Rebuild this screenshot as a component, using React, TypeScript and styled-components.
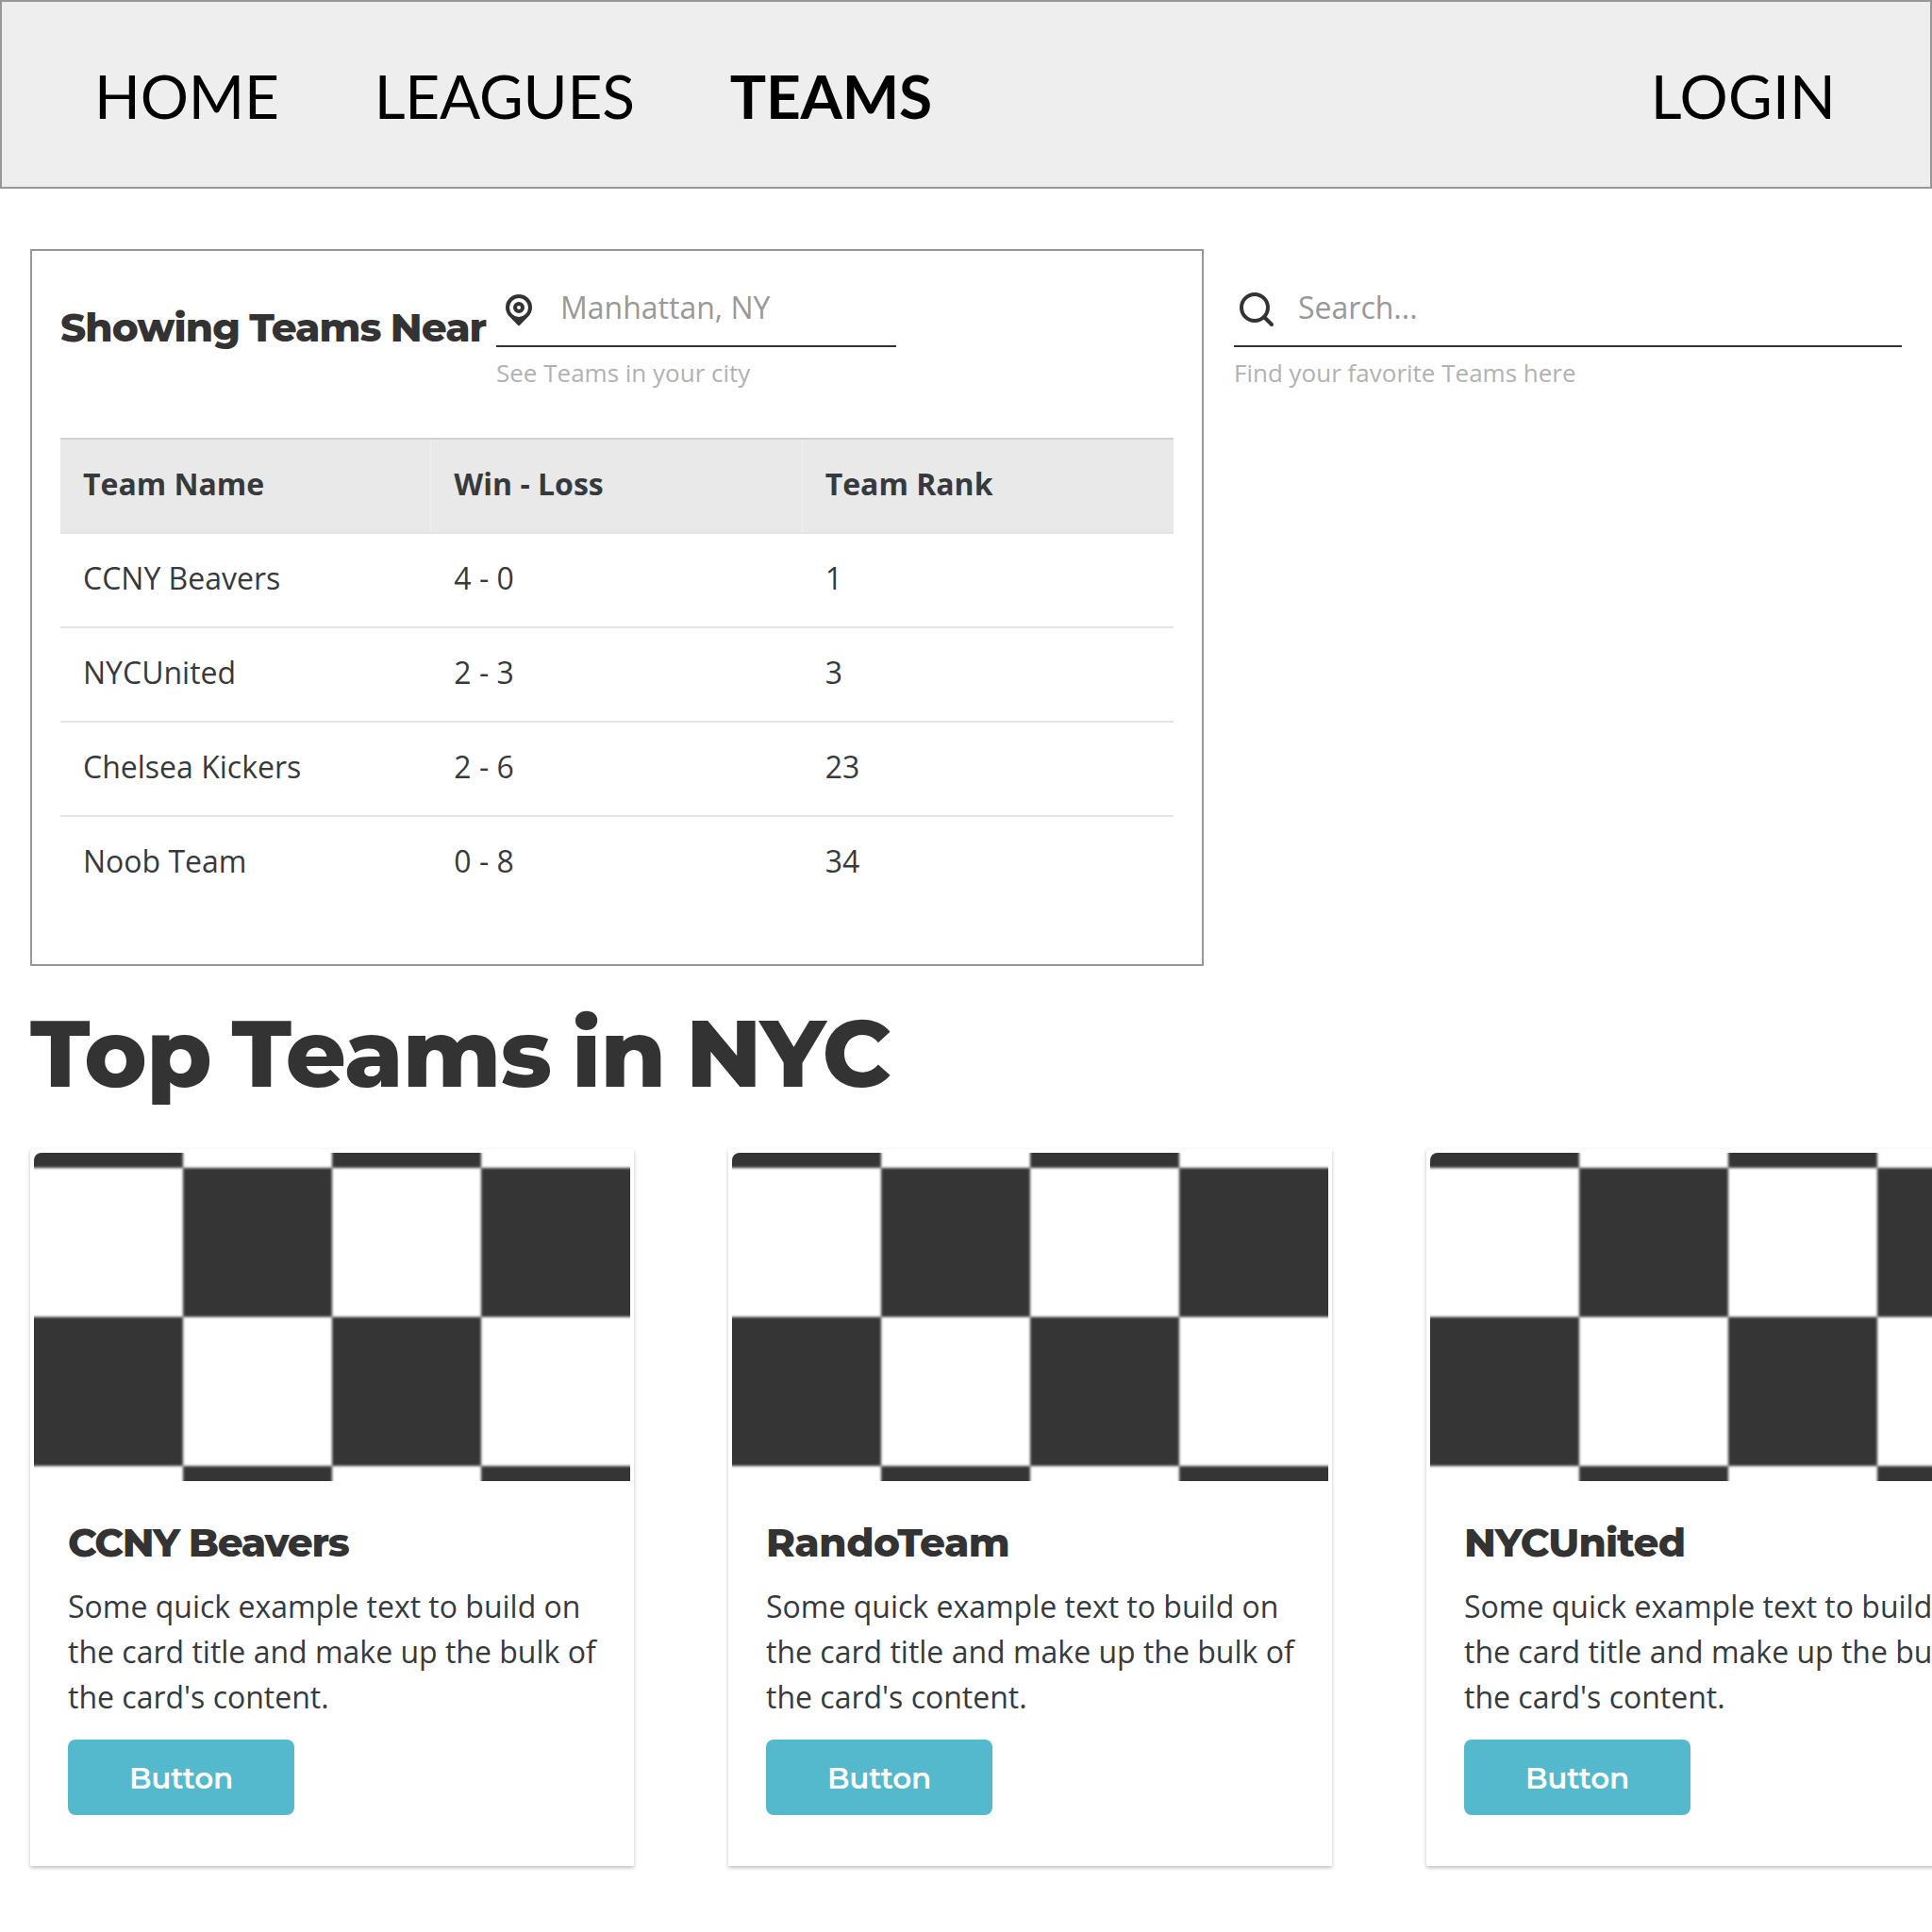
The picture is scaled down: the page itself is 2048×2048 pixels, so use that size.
import React from "react";
import styled, { createGlobalStyle } from "styled-components";

const Global = createGlobalStyle`
  * { box-sizing: border-box; }
  html, body { margin: 0; background: #fff; }
  body { overflow: hidden; font-family: "Open Sans", sans-serif; color: #373a3c; }
`;

const Page = styled.div`
  width: 2048px;
  height: 2048px;
  overflow: hidden;
`;

const NavBar = styled.nav`
  display: flex;
  align-items: center;
  gap: 101px;
  height: 200px;
  padding: 2px 100px 0 98px;
  border: 2px solid #979797;
  background: #eee;
`;

const NavItem = styled.a<{ $active?: boolean; $end?: boolean }>`
  font-family: Lato, sans-serif;
  font-size: 64px;
  line-height: 77px;
  font-weight: ${(p) => (p.$active ? 700 : 400)};
  letter-spacing: ${(p) => (p.$end ? "0.15px" : "-0.2px")};
  margin-left: ${(p) => (p.$end ? "auto" : "0")};
  color: #000;
`;

const TopSection = styled.section`
  display: flex;
  align-items: flex-start;
  gap: 32px;
  padding: 64px 32px 0;
`;

const NearbyPanel = styled.div`
  width: 1244px;
  height: 760px;
  padding: 30px;
  border: 2px solid #979797;
`;

const NearbyHeader = styled.div`
  display: flex;
  align-items: flex-start;
  height: 168px;
`;

const Heading = styled.h3<{ $spacing: number }>`
  margin: 0;
  font-family: Montserrat, Inter, sans-serif;
  font-size: 42px;
  line-height: 48px;
  font-weight: 800;
  letter-spacing: ${(p) => p.$spacing}px;
  word-spacing: -1px;
  white-space: nowrap;
  color: #333;
`;

const NearbyTitle = styled.div`
  width: 462px;
  padding-top: 27px;
`;

const Field = styled.div<{ $width: number }>`
  width: ${(p) => p.$width}px;
`;

const FieldRow = styled.div`
  display: flex;
  align-items: center;
  gap: 20px;
  height: 72px;
  padding-bottom: 8px;
  border-bottom: 2px solid #333;
`;

const Placeholder = styled.span`
  margin-bottom: 2px;
  font-size: 32px;
  line-height: 44px;
  color: #999;
`;

const Hint = styled.div`
  margin-top: 9px;
  font-size: 26px;
  line-height: 36px;
  color: #b2b2b2;
`;

const SearchArea = styled.div`
  padding-top: 32px;
`;

const Table = styled.div`
  display: flex;
  flex-direction: column;
`;

const Row = styled.div<{ $head?: boolean }>`
  display: grid;
  grid-template-columns: repeat(3, 1fr);
  height: ${(p) => (p.$head ? 102 : 100)}px;
  border-top: ${(p) => (p.$head ? "2px solid #d1d1d1" : "0")};
  border-bottom: 2px solid #e4e4e4;
  background: ${(p) => (p.$head ? "#e9e9e9" : "#fff")};
  font-weight: ${(p) => (p.$head ? 700 : 400)};
  &:last-child { border-bottom-color: transparent; }
`;

const Cell = styled.div<{ $head?: boolean }>`
  display: flex;
  align-items: center;
  padding: 0 24px 6px;
  font-size: 32px;
  border-right: ${(p) => (p.$head ? "1px solid #f1f1f1" : "0")};
  &:last-child { border-right: 0; }
`;

const SectionTitle = styled.h1`
  margin: 30px 0 0 32px;
  height: 164px;
  font-family: Montserrat, Inter, sans-serif;
  font-size: 100px;
  line-height: 124px;
  font-weight: 800;
  letter-spacing: -0.7px;
  word-spacing: -7px;
  white-space: nowrap;
  color: #333;
`;

const Cards = styled.section`
  display: flex;
  gap: 100px;
  padding-left: 32px;
`;

const Card = styled.article`
  flex: 0 0 640px;
  height: 760px;
  padding: 4px;
  background: #fff;
  box-shadow: 0 2px 4px rgba(0, 0, 0, 0.25);
`;

const Photo = styled.svg`
  display: block;
  width: 632px;
  height: 348px;
  border-top-left-radius: 8px;
`;

const SoftSquares = styled.g`
  filter: blur(1.7px);
`;

const CardBody = styled.div`
  display: flex;
  flex-direction: column;
  align-items: flex-start;
  padding: 41px 36px 0;
`;

const CardText = styled.p`
  margin: 20px 0 21px;
  font-size: 32px;
  line-height: 48px;
  white-space: pre;
`;

const Button = styled.button`
  width: 240px;
  height: 80px;
  padding: 2px 0 0;
  border: 0;
  border-radius: 8px;
  background: #55b9cd;
  color: #fff;
  font-family: Montserrat, Inter, sans-serif;
  font-size: 31px;
  font-weight: 600;
  letter-spacing: -0.2px;
`;

const PinIcon = () => (
  <svg width="48" height="48" viewBox="0 0 48 48" fill="none">
    <path
      fill="#333"
      fillRule="evenodd"
      d="M24 9a14 14 0 0 0-14 14c0 4 1.6 7 4.2 9.8l8.3 8.5a2 2 0 0 0 3 0l8.3-8.5C36.4 30 38 27 38 23A14 14 0 0 0 24 9ZM24 13a10 10 0 1 1 0 20 10 10 0 0 1 0-20Z"
    />
    <circle cx="24" cy="23" r="4" stroke="#333" strokeWidth="4" />
  </svg>
);

const SearchIcon = () => (
  <svg width="48" height="48" viewBox="0 0 48 48" fill="none" stroke="#333" strokeWidth="4">
    <circle cx="22" cy="23" r="14" />
    <path d="M32 33l8 8" strokeLinecap="round" />
  </svg>
);

const Checkerboard = () => (
  <Photo viewBox="0 0 632 348">
    <rect width="632" height="348" fill="#fff" />
    <SoftSquares>
      {[-1, 0, 1, 2, 3, 4].flatMap((col) =>
        [0, 1, 2, 3]
          .filter((row) => (row + Math.min(Math.max(col, 0), 3)) % 2 === 0)
          .map((row) => (
            <rect key={`${col}-${row}`} x={col * 158} y={row * 158 - 142} width="158" height="158" fill="#353535" />
          ))
      )}
    </SoftSquares>
  </Photo>
);

const columns = ["Team Name", "Win - Loss", "Team Rank"];

const rows = [
  ["CCNY Beavers", "4 - 0", "1"],
  ["NYCUnited", "2 - 3", "3"],
  ["Chelsea Kickers", "2 - 6", "23"],
  ["Noob Team", "0 - 8", "34"],
];

const cards = [
  { name: "CCNY Beavers", spacing: -1.25 },
  { name: "RandoTeam", spacing: -0.5 },
  { name: "NYCUnited", spacing: -0.8 },
];

const blurb = "Some quick example text to build on\nthe card title and make up the bulk of\nthe card's content.";

export default function App() {
  return (
    <Page>
      <Global />
      <NavBar>
        <NavItem>HOME</NavItem>
        <NavItem>LEAGUES</NavItem>
        <NavItem $active>TEAMS</NavItem>
        <NavItem $end>LOGIN</NavItem>
      </NavBar>
      <TopSection>
        <NearbyPanel>
          <NearbyHeader>
            <NearbyTitle>
              <Heading $spacing={-0.93}>Showing Teams Near</Heading>
            </NearbyTitle>
            <Field $width={424}>
              <FieldRow>
                <PinIcon />
                <Placeholder>Manhattan, NY</Placeholder>
              </FieldRow>
              <Hint>See Teams in your city</Hint>
            </Field>
          </NearbyHeader>
          <Table>
            <Row $head>
              {columns.map((t) => (
                <Cell $head key={t}>{t}</Cell>
              ))}
            </Row>
            {rows.map((r) => (
              <Row key={r[0]}>
                {r.map((t) => (
                  <Cell key={t}>{t}</Cell>
                ))}
              </Row>
            ))}
          </Table>
        </NearbyPanel>
        <SearchArea>
          <Field $width={708}>
            <FieldRow>
              <SearchIcon />
              <Placeholder>Search...</Placeholder>
            </FieldRow>
            <Hint>Find your favorite Teams here</Hint>
          </Field>
        </SearchArea>
      </TopSection>
      <SectionTitle>Top Teams in NYC</SectionTitle>
      <Cards>
        {cards.map((c) => (
          <Card key={c.name}>
            <Checkerboard />
            <CardBody>
              <Heading $spacing={c.spacing}>{c.name}</Heading>
              <CardText>{blurb}</CardText>
              <Button>Button</Button>
            </CardBody>
          </Card>
        ))}
      </Cards>
    </Page>
  );
}
